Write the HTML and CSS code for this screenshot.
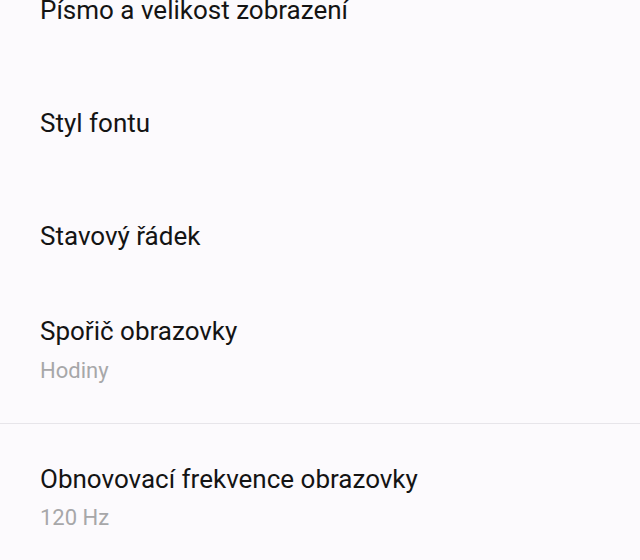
FILE: index.html
```html
<!DOCTYPE html>
<html lang="cs">
<head>
<meta charset="utf-8">
<link rel="stylesheet" href="styles.css">
</head>
<body>
<div class="list">
  <div class="item single"><div class="title">Písmo a velikost zobrazení</div></div>
  <div class="item single"><div class="title">Styl fontu</div></div>
  <div class="item single"><div class="title">Stavový řádek</div></div>
  <div class="item double first-double">
    <div class="title">Spořič obrazovky</div>
    <div class="subtitle">Hodiny</div>
  </div>
  <div class="divider"></div>
  <div class="item double second-double">
    <div class="title">Obnovovací frekvence obrazovky</div>
    <div class="subtitle">120 Hz</div>
  </div>
</div>
</body>
</html>
```
FILE: styles.css
```css
html, body {
  margin: 0;
  padding: 0;
  background: #fcfafd;
}
body {
  width: 640px;
  height: 560px;
  overflow: hidden;
  font-family: Roboto, "Noto Sans", sans-serif;
}
.list {
  display: flex;
  flex-direction: column;
  margin-top: -47px;
}
.item {
  display: flex;
  flex-direction: column;
  padding-left: 40px;
}
.single {
  height: 113px;
  justify-content: center;
}
.title {
  font-size: 26px;
  line-height: 32px;
  color: #141414;
}
.subtitle {
  font-size: 22px;
  line-height: 28px;
  color: #a7a7a9;
  margin-top: 9px;
}
.first-double {
  padding-top: 23px;
  height: 108px;
}
.first-double .subtitle {
  margin-top: 10px;
}
.divider {
  height: 1px;
  background: #e7e5ea;
}
.second-double {
  padding-top: 39px;
}
```
